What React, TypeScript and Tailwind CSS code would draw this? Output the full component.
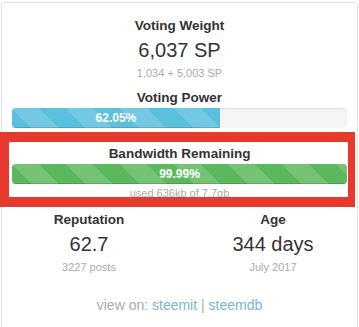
import React from "react";

const stripes =
  "bg-[linear-gradient(45deg,rgba(255,255,255,.15)_25%,transparent_25%,transparent_50%,rgba(255,255,255,.15)_50%,rgba(255,255,255,.15)_75%,transparent_75%,transparent)] bg-[length:54px_54px]";

interface ProgressProps {
  value: number;
  color: string;
}

const Progress: React.FC<ProgressProps> = ({ value, color }) => {
  return (
    <div className="h-[20px] w-full overflow-hidden rounded-[4px] bg-[#f5f5f5] shadow-[inset_0_1px_2px_rgba(0,0,0,0.1)]">
      <div
        className={`flex h-full items-center justify-center text-[12px] font-bold text-white shadow-[inset_0_-1px_0_rgba(0,0,0,0.15)] ${color} ${stripes}`}
        style={{ width: `${value}%` }}
      >
        {value.toFixed(2)}%
      </div>
    </div>
  );
};

const Stat: React.FC<{ label: string; value: string; sub: string }> = ({ label, value, sub }) => (
  <div className="flex flex-col items-center">
    <div className="text-[13.5px] font-bold leading-[20px] text-[#333]">{label}</div>
    <div className="mt-[2px] text-[20px] font-light leading-[24px] text-[#333]">{value}</div>
    <div className="mt-[3px] text-[11px] leading-[16px] text-[#aaa]">{sub}</div>
  </div>
);

export default function App() {
  return (
    <div
      className="relative h-[327px] w-[359px] overflow-hidden bg-white"
      style={{ fontFamily: '"Liberation Sans", Arial, sans-serif' }}
    >
      <div className="ml-[1px] mt-[2px] h-[340px] w-[357px] rounded-t-[3px] border border-[#e3e3e3] pt-[13px]">
        <div className="px-[10px]">
          <Stat label="Voting Weight" value="6,037 SP" sub="1,034 + 5,003 SP" />

          <div className="mt-[7px] text-center text-[13.5px] font-bold leading-[20px] text-[#333]">
            Voting Power
          </div>
          <Progress value={62.05} color="bg-[#5bc0de]" />

          <div className="mt-[16px] text-center text-[13.5px] font-bold leading-[20px] text-[#333]">
            Bandwidth Remaining
          </div>
          <Progress value={99.99} color="bg-[#5cb85c]" />
          <div className="mt-[1px] text-center text-[11px] leading-[16px] text-[#aaa]">
            used 636kb of 7.7gb
          </div>
        </div>

        <div className="mt-[9px] grid w-[360px] -ml-[1px] grid-cols-[176px_176px] gap-x-[8px]">
          <Stat label="Reputation" value="62.7" sub="3227 posts" />
          <Stat label="Age" value="344 days" sub="July 2017" />
        </div>

        <div className="mt-[21px] text-center text-[14px] leading-[18px] text-[#aaa]">
          view on: <span className="text-[#7fb0d6]">steemit</span> |{" "}
          <span className="text-[#7fb0d6]">steemdb</span>
        </div>
      </div>

      <div className="pointer-events-none absolute left-0 top-[132px] h-[75px] w-[355px] border-b-[10px] border-l-[9px] border-r-[7px] border-t-[10px] border-[#e8392f]" />
    </div>
  );
}
